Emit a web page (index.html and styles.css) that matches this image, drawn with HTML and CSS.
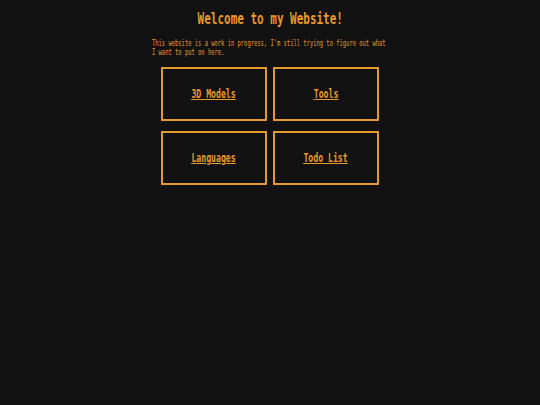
FILE: index.html
```html
<!DOCTYPE html>
<html>
<head>
<meta charset="utf-8">
<title>Welcome</title>
<link rel="stylesheet" href="styles.css">
</head>
<body>
<main class="page">
  <h1 class="title"><span class="squeeze">Welcome to my Website!</span></h1>
  <section class="intro">
    <p class="intro-text">This website is a work in progress, I'm still trying to figure out what I want to put on here.</p>
  </section>
  <nav class="grid">
    <a class="card" href="#"><span class="squeeze label">3D Models</span></a>
    <a class="card" href="#"><span class="squeeze label">Tools</span></a>
    <a class="card" href="#"><span class="squeeze label">Languages</span></a>
    <a class="card" href="#"><span class="squeeze label">Todo List</span></a>
  </nav>
</main>
</body>
</html>
```
FILE: styles.css
```css
html, body {
  margin: 0;
  padding: 0;
  background: #111111;
  height: 100%;
}
body {
  font-family: "DejaVu Sans Mono", "Liberation Mono", monospace;
  color: #e99a2e;
}
.page {
  display: flex;
  flex-direction: column;
  align-items: center;
}
.squeeze {
  display: inline-block;
  transform: scaleX(0.665);
  white-space: nowrap;
}
.title {
  margin: 9px 0 0 0;
  font-size: 16.5px;
  line-height: 20px;
  font-weight: bold;
  text-align: center;
  width: 540px;
}
.intro {
  width: 240px;
  height: 20px;
  margin-top: 10px;
}
.intro-text {
  margin: 0;
  width: 344px;
  font-size: 8px;
  line-height: 9px;
  transform: scaleX(0.683);
  transform-origin: left top;
  margin-left: 2px;
}
.grid {
  margin-top: 8px;
  display: grid;
  grid-template-columns: 106px 106px;
  grid-auto-rows: 54px;
  column-gap: 6px;
  row-gap: 10px;
}
.card {
  box-sizing: border-box;
  border: 2px solid #e99a2e;
  display: flex;
  align-items: center;
  justify-content: center;
  color: #e99a2e;
  text-decoration: underline;
}
.label {
  font-size: 12px;
  line-height: 14px;
  font-weight: bold;
  transform: scaleX(0.68);
  text-decoration: underline;
}
```
